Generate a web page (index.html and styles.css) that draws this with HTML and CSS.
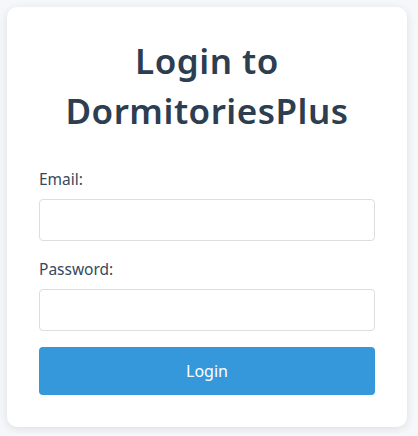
FILE: index.html
```html
<!DOCTYPE html>
<html lang="en">
<head>
<meta charset="utf-8">
<title>Login to DormitoriesPlus</title>
<link rel="stylesheet" href="styles.css">
</head>
<body>
  <main class="card">
    <h1 class="title">Login to DormitoriesPlus</h1>
    <form class="form">
      <div class="group">
        <label class="label" for="email">Email:</label>
        <input class="input" id="email" type="email">
      </div>
      <div class="group">
        <label class="label" for="password">Password:</label>
        <input class="input" id="password" type="password">
      </div>
      <button class="btn" type="button">Login</button>
    </form>
  </main>
</body>
</html>
```
FILE: styles.css
```css
* { box-sizing: border-box; }
html, body { margin: 0; }
body {
  background: #f5f7fa;
  padding: 7px;
  font-family: "Noto Sans", "Open Sans", sans-serif;
  color: #2c3e50;
}
.card {
  width: 400px;
  height: 420px;
  background: #fff;
  border-radius: 10px;
  box-shadow: 0 2px 10px rgba(0, 0, 0, 0.1);
  padding: 29px 32px 32px;
}
.title {
  margin: 0 0 32px;
  text-align: center;
  font-size: 35px;
  font-weight: 600;
  letter-spacing: 0.5px;
  line-height: 49.5px;
  color: #2c3e50;
}
.form { display: flex; flex-direction: column; }
.group { display: flex; flex-direction: column; margin-bottom: 16px; }
.label {
  font-size: 15.5px;
  line-height: 24px;
  margin-bottom: 8px;
  color: #34495e;
}
.input {
  height: 42px;
  border: 1px solid #ddd;
  border-radius: 4px;
  padding: 0 10px;
  font: inherit;
  background: #fff;
}
.btn {
  height: 48px;
  border: 0;
  border-radius: 4px;
  background: #3498db;
  color: #fff;
  font-family: inherit;
  font-size: 16px;
  cursor: pointer;
}
```
